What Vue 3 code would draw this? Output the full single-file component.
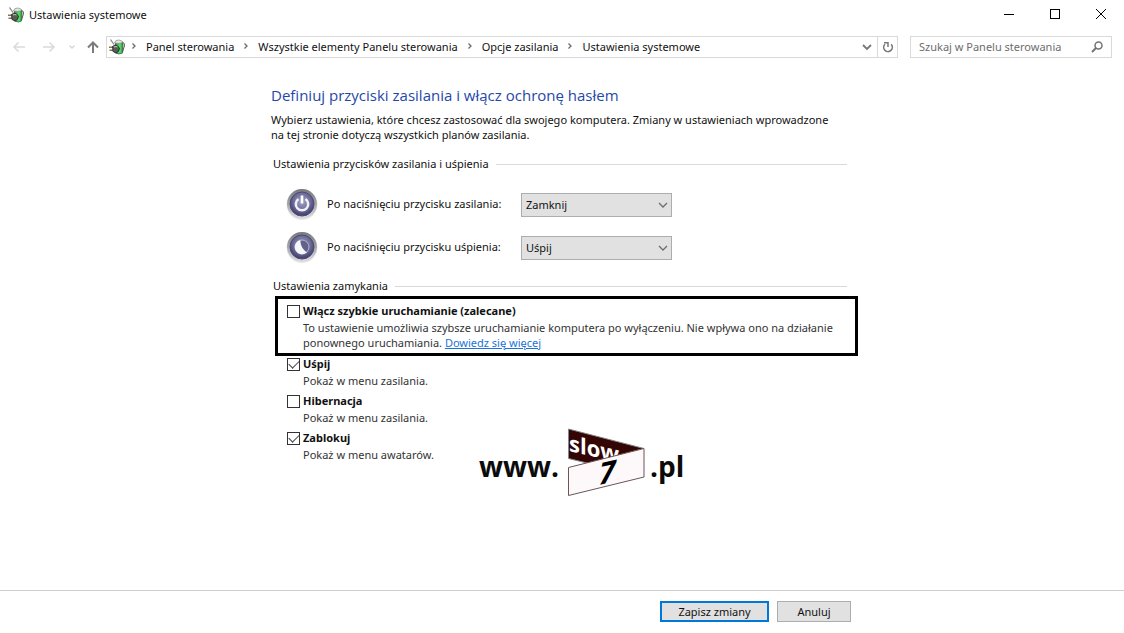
<script setup>
import { ref } from 'vue'

const crumbs = ['Panel sterowania', 'Wszystkie elementy Panelu sterowania', 'Opcje zasilania', 'Ustawienia systemowe']
const actions = ['Uśpij', 'Zamknij', 'Hibernacja', 'Nic nie rób']
const powerAction = ref('Zamknij')
const sleepAction = ref('Uśpij')
const fastStartup = ref(false)
const search = ref('')
const options = ref([
  { id: 'sleep', label: 'Uśpij', note: 'Pokaż w menu zasilania.', on: true },
  { id: 'hibernate', label: 'Hibernacja', note: 'Pokaż w menu zasilania.', on: false },
  { id: 'lock', label: 'Zablokuj', note: 'Pokaż w menu awatarów.', on: true }
])
</script>

<template>
  <div class="window">
    <svg class="defs" width="0" height="0" aria-hidden="true">
      <defs>
        <linearGradient id="batteryFill" x1="0" x2="1">
          <stop offset="0" stop-color="#1f9a30" />
          <stop offset="0.6" stop-color="#5fe070" />
          <stop offset="1" stop-color="#1c8a2a" />
        </linearGradient>
        <linearGradient id="ringFill" x1="0" y1="0" x2="0" y2="1">
          <stop offset="0" stop-color="#77777d" />
          <stop offset="0.5" stop-color="#a5a5ae" />
          <stop offset="1" stop-color="#dcdce2" />
        </linearGradient>
        <radialGradient id="orbFill" cx="0.5" cy="0.4" r="0.6">
          <stop offset="0" stop-color="#a3a3c6" />
          <stop offset="0.6" stop-color="#6c6b97" />
          <stop offset="1" stop-color="#3c3a66" />
        </radialGradient>
        <symbol id="battery" viewBox="0 0 16 16">
          <path d="M6.500 3h7.500l-.5 11q-3.500 2-7 0z" fill="url(#batteryFill)" stroke="#2c5a34" stroke-width="0.700" />
          <path d="M5.500 4Q6 1 9.500 1t4.500 2.500q-4 1.500-8.500.5z" fill="#e2e8e2" stroke="#777" stroke-width="0.600" />
          <path d="M1.500.5 5 5.500" stroke="#858585" stroke-width="1.300" />
          <path d="M14 3.500q2 1 1.400 3.500L13.500 13" stroke="#555" stroke-width="1" fill="none" />
          <path d="M0 8.200h4M.5 11.300h4" stroke="#8a7545" stroke-width="1.500" />
          <path d="M3.500 7.500 6 6q3.500.5 4.500 3.500-.5 3.500-3.500 4.500L4 12.500z" fill="#565c58" stroke="#222" stroke-width="0.800" />
          <path d="M5 8q2-1 3.500 0" stroke="#c9ccca" fill="none" />
        </symbol>
      </defs>
    </svg>

    <header class="titlebar">
      <svg class="app-icon" width="16" height="16" aria-hidden="true"><use href="#battery" /></svg>
      <span class="title">Ustawienia systemowe</span>
      <div class="controls">
        <button type="button" aria-label="Minimalizuj">
          <svg width="12" height="12" shape-rendering="crispEdges"><path d="M1 5.500h10" stroke="#000" /></svg>
        </button>
        <button type="button" aria-label="Maksymalizuj">
          <svg width="12" height="12" shape-rendering="crispEdges"><rect x="1.500" y="0.500" width="9" height="9" fill="none" stroke="#000" /></svg>
        </button>
        <button type="button" aria-label="Zamknij">
          <svg width="12" height="12"><path d="M1 0l10 10M11 0L1 10" stroke="#000" /></svg>
        </button>
      </div>
    </header>

    <nav class="navbar" aria-label="Nawigacja">
      <div class="history">
        <button type="button" class="back" aria-label="Wstecz" disabled>
          <svg width="14" height="12"><path d="M13 6H2M6.500 1.500 2 6l4.500 4.500" fill="none" stroke="#dadada" stroke-width="1.500" /></svg>
        </button>
        <button type="button" class="forward" aria-label="Dalej" disabled>
          <svg width="14" height="12"><path d="M1 6h11M7.500 1.500 12 6l-4.500 4.500" fill="none" stroke="#dadada" stroke-width="1.500" /></svg>
        </button>
        <button type="button" class="recent" aria-label="Ostatnie lokalizacje" disabled>
          <svg width="8" height="6"><path d="M1.500 1.500 4 4l2.500-2.500" fill="none" stroke="#d4d4d4" stroke-width="1.300" /></svg>
        </button>
        <button type="button" class="up" aria-label="W górę">
          <svg width="14" height="14"><path d="M7 13V2.500M2 7.500l5-5 5 5" fill="none" stroke="#7c7c7c" stroke-width="2" /></svg>
        </button>
      </div>
      <div class="address">
        <svg class="app-icon" width="16" height="16" aria-hidden="true"><use href="#battery" /></svg>
        <ol class="crumbs">
          <li v-for="crumb in crumbs" :key="crumb">
            <svg width="6" height="8" aria-hidden="true"><path d="M1.500 1.500 4 4 1.500 6.500" fill="none" stroke="#6b6b6b" stroke-width="1.300" /></svg>
            <a href="#">{{ crumb }}</a>
          </li>
        </ol>
        <button type="button" class="history-toggle" aria-label="Poprzednie lokalizacje">
          <svg width="10" height="8"><path d="M1 2l4 4 4-4" fill="none" stroke="#777" stroke-width="1.800" /></svg>
        </button>
        <button type="button" class="refresh" aria-label="Odśwież">
          <svg width="12" height="12"><path d="M3 3.200A4.300 4.300 0 1 0 9.200 3.400" fill="none" stroke="#777" stroke-width="1.600" /><path d="M2 1.800h4V6" fill="none" stroke="#777" stroke-width="1.500" /></svg>
        </button>
      </div>
      <label class="search">
        <input v-model="search" type="text" placeholder="Szukaj w Panelu sterowania" aria-label="Szukaj w Panelu sterowania">
        <svg width="12" height="12" aria-hidden="true"><circle cx="7.500" cy="4.500" r="3.500" fill="none" stroke="#737373" stroke-width="1.500" /><path d="M5 7 1 11" stroke="#737373" stroke-width="2" /></svg>
      </label>
    </nav>

    <main class="content">
      <h1>Definiuj przyciski zasilania i włącz ochronę hasłem</h1>
      <p class="intro">Wybierz ustawienia, które chcesz zastosować dla swojego komputera. Zmiany w ustawieniach wprowadzone na tej stronie dotyczą wszystkich planów zasilania.</p>

      <section class="buttons-group">
        <h2>Ustawienia przycisków zasilania i uśpienia</h2>
        <div class="setting">
          <svg width="32" height="32" aria-hidden="true">
            <circle cx="16" cy="16.500" r="15.500" fill="#e9e9ec" />
            <circle cx="16" cy="16" r="15" fill="url(#ringFill)" />
            <circle cx="16" cy="16" r="12" fill="url(#orbFill)" stroke="#4c4b70" />
            <path d="M12.500 11a6.200 6.200 0 1 0 7 0" fill="none" stroke="#f1f1f7" stroke-width="2.500" />
            <path d="M16 7.500v8" stroke="#fff" stroke-width="2.600" />
          </svg>
          <label for="power-action">Po naciśnięciu przycisku zasilania:</label>
          <div class="dropdown">
            <select id="power-action" v-model="powerAction">
              <option v-for="action in actions" :key="action">{{ action }}</option>
            </select>
            <svg width="10" height="7" aria-hidden="true"><path d="M1 1l4 4 4-4" fill="none" stroke="#6d6d6d" stroke-width="1.300" /></svg>
          </div>
        </div>
        <div class="setting">
          <svg width="32" height="32" aria-hidden="true">
            <circle cx="16" cy="16.500" r="15.500" fill="#e9e9ec" />
            <circle cx="16" cy="16" r="15" fill="url(#ringFill)" />
            <circle cx="16" cy="16" r="12" fill="url(#orbFill)" stroke="#4c4b70" />
            <circle cx="16" cy="16" r="7" fill="#63628c" stroke="#b4b4cd" />
            <path d="M14.500 9A7.200 7.200 0 1 0 21 21.200C17.500 19.500 14 14.500 14.500 9z" fill="#f5f5fa" />
          </svg>
          <label for="sleep-action">Po naciśnięciu przycisku uśpienia:</label>
          <div class="dropdown">
            <select id="sleep-action" v-model="sleepAction">
              <option v-for="action in actions" :key="action">{{ action }}</option>
            </select>
            <svg width="10" height="7" aria-hidden="true"><path d="M1 1l4 4 4-4" fill="none" stroke="#6d6d6d" stroke-width="1.300" /></svg>
          </div>
        </div>
      </section>

      <section class="shutdown-group">
        <h2>Ustawienia zamykania</h2>
        <div class="option highlighted">
          <input id="fast-startup" v-model="fastStartup" type="checkbox">
          <label for="fast-startup">Włącz szybkie uruchamianie (zalecane)</label>
          <p>To ustawienie umożliwia szybsze uruchamianie komputera po wyłączeniu. Nie wpływa ono na działanie ponownego uruchamiania. <a href="#">Dowiedz się więcej</a></p>
        </div>
        <div class="rest">
          <div class="options">
            <div v-for="option in options" :key="option.id" class="option">
              <input :id="option.id" v-model="option.on" type="checkbox">
              <label :for="option.id">{{ option.label }}</label>
              <p>{{ option.note }}</p>
            </div>
          </div>
          <svg class="brand" width="208" height="70" role="img" aria-label="www.slow7.pl">
            <text class="brand-text" x="0" y="49">www.</text>
            <path d="M89.500 1 165 20.500 110 35.500 89.500 30.500z" fill="#330505" stroke="#888" />
            <text class="brand-slow" transform="translate(90 23) skewY(13)">slow</text>
            <path d="M89.500 39.500 165 20.500V49L89.500 67.500z" fill="#fdf9fa" stroke="#6d5555" />
            <text class="brand-seven" transform="translate(120 57) skewY(-13)">7</text>
            <text class="brand-text" x="171" y="49">.pl</text>
          </svg>
        </div>
      </section>
    </main>

    <footer class="footer">
      <div class="footer-inner">
        <button type="button" class="primary">Zapisz zmiany</button>
        <button type="button">Anuluj</button>
      </div>
    </footer>
  </div>
</template>

<style>
body {
  background: #fff;
}
</style>

<style scoped>
.window {
  display: flex;
  flex-direction: column;
  min-height: 100vh;
  background: #fff;
  color: #111;
  font: 11px/15px "Noto Sans", "Open Sans", sans-serif;
}
.window * {
  box-sizing: border-box;
}
.defs {
  position: absolute;
}
svg {
  display: block;
  flex: none;
}
button {
  display: grid;
  place-items: center;
  padding: 0;
  border: 0;
  background: none;
  color: inherit;
  font: inherit;
}
h1,
h2,
p,
ol {
  margin: 0;
  padding: 0;
  font-weight: 400;
}

.titlebar {
  display: flex;
  align-items: center;
  height: 29px;
  padding-left: 8px;
  gap: 5px;
}
.controls {
  display: flex;
  margin-left: auto;
}
.controls button {
  width: 46px;
  height: 29px;
}

.navbar {
  display: flex;
  align-items: center;
  height: 36px;
  padding: 0 12px;
}
.history {
  display: flex;
  align-items: center;
  width: 94px;
}
.forward {
  margin-left: 16px;
}
.recent {
  margin-left: 12px;
}
.up {
  margin-left: 10px;
}
.address {
  display: flex;
  flex: 1;
  align-items: center;
  min-width: 0;
  height: 22px;
  padding-left: 2px;
  border: 1px solid #d9d9d9;
}
.crumbs {
  display: flex;
  flex: 1;
  min-width: 0;
  overflow: hidden;
  padding: 0 0 2px 6px;
  list-style: none;
  white-space: nowrap;
}
.crumbs li {
  display: flex;
  align-items: center;
  gap: 9px;
  margin-right: 9px;
}
.crumbs a {
  color: inherit;
  text-decoration: none;
}
.history-toggle {
  width: 20px;
  height: 20px;
}
.refresh {
  width: 20px;
  height: 20px;
  border-left: 1px solid #d9d9d9;
}
.search {
  display: flex;
  align-items: center;
  width: 202px;
  height: 22px;
  margin-left: 12px;
  padding: 0 8px;
  border: 1px solid #d9d9d9;
}
.search input {
  flex: 1;
  min-width: 0;
  padding: 0 0 2px;
  border: 0;
  outline: 0;
  background: none;
  font: inherit;
}
.search input::placeholder {
  color: #6d6d6d;
  opacity: 1;
}

.content {
  flex: 1;
  width: 100%;
  max-width: 582px;
  margin: 0 auto;
  padding-top: 18px;
}
h1 {
  margin-bottom: 5px;
  color: #1f48a8;
  font-family: "Open Sans", "Noto Sans", sans-serif;
  font-size: 15px;
  line-height: 24px;
}
.intro {
  padding-right: 12px;
}
h2 {
  display: flex;
  align-items: center;
  gap: 7px;
  margin: 0 6px 0 2px;
  font-size: 11px;
  line-height: 16px;
}
h2::after {
  flex: 1;
  height: 1px;
  background: #d9d9d9;
  content: "";
}
.buttons-group {
  margin-top: 14px;
}
.buttons-group h2 {
  margin-bottom: 11px;
}
.setting {
  display: grid;
  grid-template-columns: 33px 186px 151px;
  column-gap: 8px;
  align-items: center;
  height: 43px;
  padding-left: 15px;
}
.setting > label,
.setting > svg {
  margin-bottom: 2px;
}
.dropdown {
  position: relative;
}
.dropdown select {
  display: block;
  width: 100%;
  height: 24px;
  padding: 0 4px;
  border: 1px solid #adadad;
  border-radius: 0;
  background: #e1e1e1;
  color: #111;
  font: inherit;
  appearance: none;
}
.dropdown svg {
  position: absolute;
  top: 9px;
  right: 4px;
  pointer-events: none;
}
.shutdown-group {
  margin-top: 9px;
}
.option {
  display: grid;
  grid-template-columns: 13px 1fr;
  column-gap: 3px;
  align-items: center;
  align-content: start;
  height: 37px;
}
.option label {
  padding-bottom: 2px;
  font-weight: 700;
}
.option p {
  grid-column: 2;
  color: #333;
}
.option a {
  display: inline-block;
  color: #1a73d9;
}
.option input {
  display: grid;
  place-items: center;
  width: 13px;
  height: 13px;
  margin: 0;
  border: 1px solid #333;
  background: #fff;
  appearance: none;
}
.option input:checked::before {
  width: 9px;
  height: 5px;
  margin-bottom: 3px;
  border: solid #444;
  border-width: 0 0 1px 1px;
  transform: rotate(-45deg);
  content: "";
}
.highlighted {
  height: auto;
  margin: 2px -5px 0 4px;
  padding: 4px 9px 3px;
  border: 3px solid #000;
}
.rest {
  display: flex;
  align-items: flex-start;
}
.options {
  flex: 0 0 208px;
  padding-left: 16px;
}
.brand {
  margin-top: 72px;
}
.brand-text {
  fill: #0b0b0b;
  font: 700 28px "Open Sans", sans-serif;
}
.brand-slow {
  fill: #fff;
  font: 700 22px "Open Sans", sans-serif;
}
.brand-seven {
  fill: #000;
  font: italic 700 30px "Open Sans", sans-serif;
}

.footer {
  border-top: 1px solid #cfcfcf;
}
.footer-inner {
  display: flex;
  justify-content: flex-end;
  gap: 8px;
  max-width: 582px;
  margin: 0 auto;
  padding: 10px 2px 11px;
}
.footer button {
  width: 74px;
  height: 21px;
  border: 1px solid #adadad;
  background: #e1e1e1;
}
.footer .primary {
  width: 109px;
  border: 2px solid #0078d7;
}
</style>
